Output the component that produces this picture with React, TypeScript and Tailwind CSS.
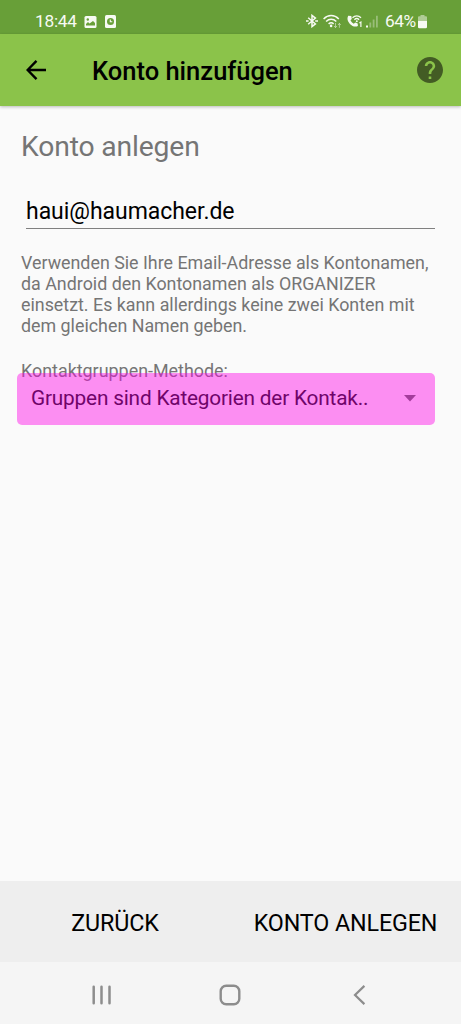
import React from "react";

function StatusBar() {
  return (
    <div className="flex h-[34px] shrink-0 items-center justify-between bg-[#689f38] pl-[35px] pr-[34px] text-[#f7faf3]">
      <div className="flex h-full items-center pt-[8px]">
        <span className="w-[49px] whitespace-nowrap text-[17.3px] leading-[20px] tracking-[-0.25px]">18:44</span>
        <svg width="13" height="12" viewBox="0 0 13 12" className="mt-px">
          <rect x="0.5" width="12" height="12" rx="1.5" fill="currentColor" />
          <circle cx="3.8" cy="3.5" r="1.2" fill="#689f38" />
          <path d="M2 9.5V8l2-2 1.5 1.5L9 5l2 2v2.5z" fill="#689f38" />
        </svg>
        <svg width="11" height="13" viewBox="0 0 11 13" className="ml-[8px] mt-px">
          <rect width="11" height="13" rx="1.5" fill="currentColor" />
          <circle cx="5.5" cy="6.5" r="3.5" fill="#689f38" />
          <path d="M5.3 4.5v2.3h2" fill="none" stroke="currentColor" strokeWidth="1.1" />
        </svg>
      </div>
      <div className="flex h-full items-center pt-[8px]">
        <svg width="12" height="14" viewBox="0 0 12 14" fill="none" stroke="currentColor" strokeWidth="1.5">
          <path d="M2.2 3.8 9.4 9.9 6 12.6V1.4L9.4 4.1 2.2 10.2" />
          <path d="M0 7h2.6M9.2 7H12" strokeWidth="1.7" />
        </svg>
        <svg width="19" height="15" viewBox="0 0 19 15" fill="none" stroke="currentColor" strokeWidth="1.5" className="ml-[5px]">
          <path d="M0.6 4.9C5 .4 11.4.4 15.8 4.9M3.1 7.5c3-3 7.2-3 10.2 0M5.6 9.9c1.6-1.4 3.6-1.4 5 0" />
          <circle cx="8.1" cy="11.9" r="1.3" fill="currentColor" stroke="none" />
          <path d="M12.5 9v4.5m-1.5-1.5 1.5 1.6 1.4-1.6M16.4 13.8V9.4M15 11l1.4-1.6L17.8 11" strokeWidth="1" opacity=".5" />
        </svg>
        <svg width="16" height="14" viewBox="0 0 16 14" fill="none" className="ml-[5px]">
          <path d="M1.2 1.7C-.2 4.4.5 7.5 2.9 9.9c2.4 2.4 5.3 3.2 8 2l-.2-2.5-2.5-1L6.8 9.8C5.2 9 4.2 7.9 3.5 6.3L4.8 5 4.3 2z" fill="currentColor" />
          <path d="M5.5 3.7c2.5-2.5 6-2.5 8.5 0M7.4 5.7c1.4-1.4 3.3-1.4 4.7 0" stroke="currentColor" strokeWidth="1.3" />
          <circle cx="9.8" cy="7.3" r="1" fill="currentColor" />
          <path d="M12.4 9l1.5-1v5" stroke="currentColor" strokeWidth="1.2" />
        </svg>
        <svg width="13" height="13" viewBox="0 0 13 13" fill="currentColor" className="ml-[3px]">
          <path d="M0 10.5h2v2H0z" />
          <path d="M3.4 7.5h1.8v5H3.4zM6.7 4.5h1.8v8H6.7zM10 .8h1.8v11.7H10z" opacity=".35" />
        </svg>
        <span className="ml-[6px] w-[33px] whitespace-nowrap text-[17.3px] leading-[20px] tracking-[-0.5px]">64%</span>
        <svg width="9" height="14" viewBox="0 0 9 14" className="mt-px">
          <path d="M2.5 0h4v1.2H8q1 0 1 1V6H0V2.2q0-1 1-1h1.5z" fill="currentColor" opacity=".5" />
          <path d="M0 6h9v6q0 1.3-1.3 1.3H1.3Q0 13.3 0 12z" fill="currentColor" />
        </svg>
      </div>
    </div>
  );
}

function AppBar() {
  return (
    <header className="flex h-[72px] shrink-0 items-center bg-[#8bc34a] pl-[26px] pr-[18px] shadow-[0_1px_3px_rgba(0,0,0,0.25)]">
      <svg width="20" height="20" viewBox="0 0 20 20" fill="none" stroke="black" strokeWidth="2.4">
        <path d="M20 10H1.8M10.5 .9 1.6 10l8.9 9.1" />
      </svg>
      <h1 className="ml-[46px] flex-1 whitespace-nowrap pt-[2px] text-[25.5px] font-medium leading-[30px] text-black">
        Konto hinzufügen
      </h1>
      <svg width="26" height="26" viewBox="2 2 20 20" fill="#435c24">
        <path d="M12 2C6.48 2 2 6.48 2 12s4.48 10 10 10 10-4.48 10-10S17.52 2 12 2zm1 17h-2v-2h2v2zm2.07-7.75-.9.92C13.45 12.9 13 13.5 13 15h-2v-.5c0-1.1.45-2.1 1.17-2.83l1.24-1.26c.37-.36.59-.86.59-1.41 0-1.1-.9-2-2-2s-2 .9-2 2H8c0-2.21 1.79-4 4-4s4 1.79 4 4c0 .88-.36 1.68-.93 2.25z" />
      </svg>
    </header>
  );
}

export default function App() {
  return (
    <div className="flex h-[1024px] w-[461px] flex-col overflow-hidden bg-[#fafafa] font-['Roboto',sans-serif]">
      <StatusBar />
      <AppBar />
      <main className="flex flex-1 flex-col pl-[21px] pr-[26px] pt-[25px] text-[#757575]">
        <h2 className="whitespace-nowrap text-[28.3px] leading-[32px] tracking-[-0.16px]">Konto anlegen</h2>
        <div className="ml-[5px] mt-[33px] h-[33px] whitespace-nowrap border-b border-[#808080] text-[23px] leading-[32px] tracking-[-0.04px] text-black">
          haui@haumacher.de
        </div>
        <p className="mt-[23px] whitespace-nowrap text-[17.85px] leading-[21px]">
          Verwenden Sie Ihre Email-Adresse als Kontonamen,
          <br />
          da Android den Kontonamen als ORGANIZER
          <br />
          einsetzt. Es kann allerdings keine zwei Konten mit
          <br />
          dem gleichen Namen geben.
        </p>
        <div className="mt-[24px] whitespace-nowrap text-[17.9px] leading-[21px]">Kontaktgruppen-Methode:</div>
        <div className="relative -ml-[4px] -mt-[8px] flex h-[52px] w-[418px] items-center justify-between rounded-[5px] bg-[#ff00e8]/43 pl-[14px] pr-[19px]">
          <span className="whitespace-nowrap pb-[2px] text-[20.8px] leading-[24px] tracking-[-0.19px] text-[#70046a]">
            Gruppen sind Kategorien der Kontak..
          </span>
          <svg width="12" height="7" viewBox="0 0 12 7" fill="#a33c9b" className="mb-[2px]">
            <path d="M0 0h12L6 6.5z" />
          </svg>
        </div>
      </main>
      <footer className="flex h-[81px] shrink-0 items-center bg-[#eeeeee] pt-[3px] text-[23.3px] leading-[28px] tracking-[-0.12px] text-black">
        <button className="w-[230px] whitespace-nowrap">ZURÜCK</button>
        <button className="w-[231px] whitespace-nowrap">KONTO ANLEGEN</button>
      </footer>
      <nav className="flex h-[62px] shrink-0 items-center bg-[#f5f5f5] pl-[92px] pt-[3px] text-[#8d8d8d]">
        <svg width="20" height="20" viewBox="0 0 20 20" fill="none" stroke="currentColor" strokeWidth="2.5" strokeLinecap="round">
          <path d="M1.7 1.7v16.6M9.5 1.7v16.6M17.5 1.7v16.6" />
        </svg>
        <svg width="22" height="22" viewBox="0 0 22 22" fill="none" stroke="currentColor" strokeWidth="2.4" className="ml-[107px]">
          <rect x="1.7" y="1.7" width="18.6" height="18.6" rx="5.5" />
        </svg>
        <svg width="13" height="20" viewBox="0 0 13 20" fill="none" stroke="currentColor" strokeWidth="2.2" className="ml-[112px]">
          <path d="M11.4 .9 2 10l9.4 9.1" />
        </svg>
      </nav>
    </div>
  );
}
